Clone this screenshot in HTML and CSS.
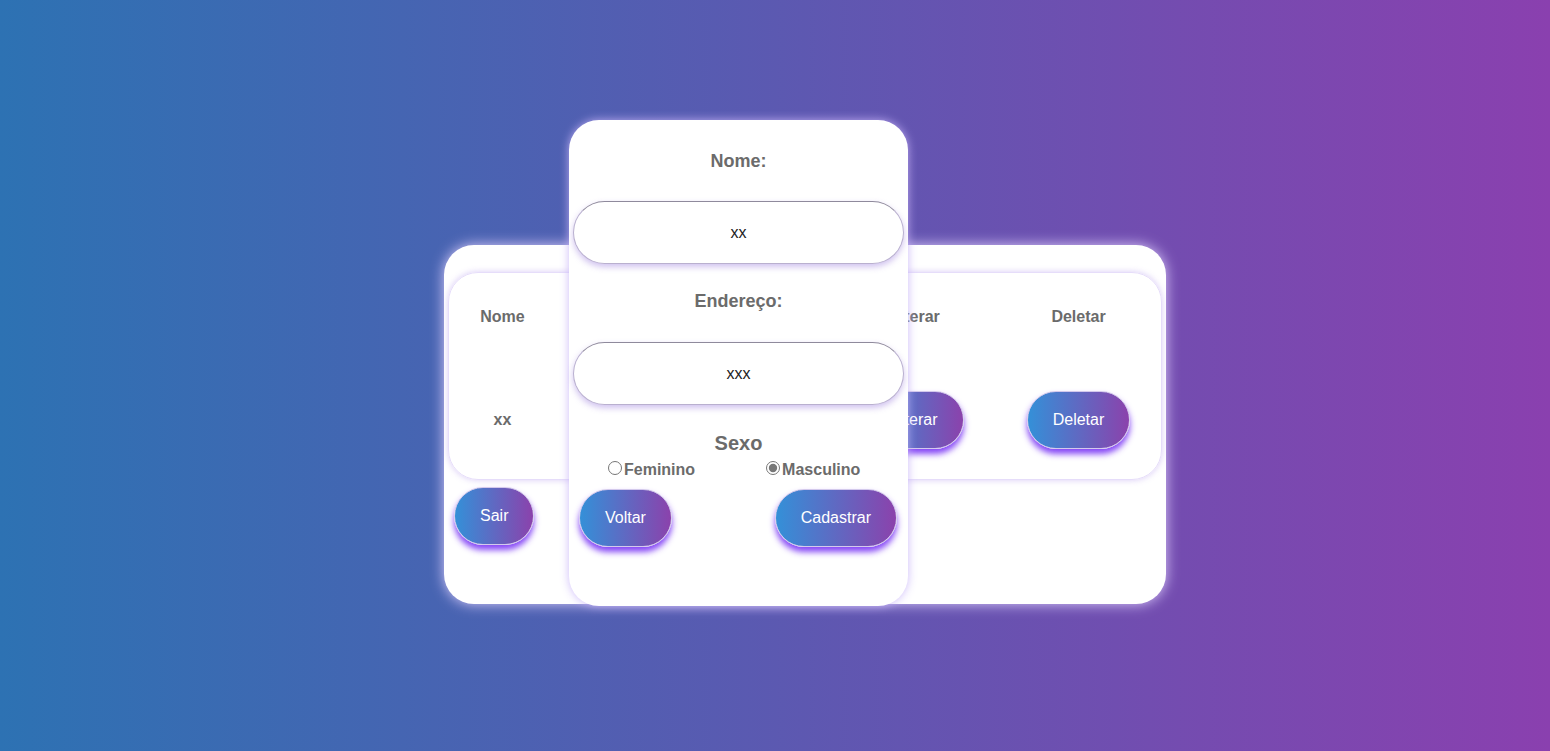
FILE: index.html
```html
<!DOCTYPE html>
<html lang="pt-BR">
<head>
  <meta charset="UTF-8">
  <meta name="viewport" content="width=device-width, initial-scale=1.0">
  <title>Cadastro</title>
  <link rel="stylesheet" href="styles.css">
</head>
<body>
  <div class="stage">
    <!-- lista de pessoas -->
    <div class="card list-card">
      <div class="table-box">
        <div class="grid">
          <div class="th">Nome</div>
          <div class="th">Endereço</div>
          <div class="th">Sexo</div>
          <div class="th">Alterar</div>
          <div class="th">Deletar</div>
          <div class="td">xx</div>
          <div class="td">xxx</div>
          <div class="td">Masculino</div>
          <div class="td"><button class="btn">Alterar</button></div>
          <div class="td"><button class="btn">Deletar</button></div>
        </div>
      </div>
      <button class="btn sair">Sair</button>

      <!-- formulario de cadastro -->
      <div class="card form-card">
        <label class="label" for="nome">Nome:</label>
        <input class="field" type="text" id="nome" value="xx">
        <label class="label endereco" for="endereco">Endereço:</label>
        <input class="field" type="text" id="endereco" value="xxx">
        <div class="label sexo">Sexo</div>
        <div class="radios">
          <label class="radio"><input type="radio" name="sexo">Feminino</label>
          <label class="radio"><input type="radio" name="sexo" checked>Masculino</label>
        </div>
        <div class="actions">
          <button class="btn">Voltar</button>
          <button class="btn">Cadastrar</button>
        </div>
      </div>
    </div>
  </div>
</body>
</html>
```

FILE: styles.css
```css
body {
  margin: 0;
  height: 100vh;
  font-family: "Liberation Sans", Arial, sans-serif;
  background: linear-gradient(to right, #2d72b3, #8a40af);
  overflow: hidden;
}
.stage {
  padding: 245px 0 0 444px;
}
.card {
  background-color: #fff;
  border-radius: 30px;
  box-shadow: 0 0 14px rgba(225, 210, 255, 0.95);
  box-sizing: border-box;
}
.list-card {
  position: relative;
  width: 722px;
  height: 359px;
  padding: 27px 4px 0;
}
.table-box {
  height: 208px;
  border-radius: 30px;
  border: 1px solid #e6ddfa;
  box-shadow: 0 0 6px rgba(170, 140, 235, 0.45);
  box-sizing: border-box;
  padding-top: 35px;
}
.grid {
  display: grid;
  grid-template-columns: 107px 138px 138px 164px 165px;
  grid-template-rows: 18px 58px;
  row-gap: 65px;
  align-items: center;
  text-align: center;
}
.th, .td {
  font-size: 16px;
  font-weight: bold;
  color: #6b6b6b;
  line-height: 18px;
}
.btn {
  height: 58px;
  padding: 0 25px;
  font-family: "Liberation Sans", Arial, sans-serif;
  font-size: 16px;
  color: #fff;
  border: 1px solid #d3c9ec;
  border-radius: 30px;
  background: linear-gradient(to right, #3490d8, #8b42ac);
  box-shadow: 0 5px 6px rgba(120, 50, 245, 0.9);
  cursor: pointer;
}
.sair {
  margin: 7px 0 0 6px;
}
.form-card {
  position: absolute;
  left: 125px;
  top: -125px;
  width: 339px;
  height: 486px;
  padding: 31px 4px 0;
  display: flex;
  flex-direction: column;
  align-items: center;
  box-shadow: 0 0 10px rgba(200, 180, 250, 0.9);
}
.label {
  font-size: 18px;
  font-weight: bold;
  color: #6b6b6b;
  line-height: 21px;
  margin-bottom: 29px;
}
.label.endereco {
  margin: 27px 0 30px;
}
.label.sexo {
  font-size: 20px;
  line-height: 23px;
  margin: 27px 0 0;
}
.field {
  width: 100%;
  height: 63px;
  box-sizing: border-box;
  border: 1px solid #b9b0cf;
  border-top-color: #8f8a9c;
  border-radius: 32px;
  text-align: center;
  font-family: "Liberation Sans", Arial, sans-serif;
  font-size: 16px;
  color: #222;
  box-shadow: 0 3px 6px rgba(150, 120, 220, 0.45);
  outline: none;
}
.radios {
  align-self: stretch;
  display: flex;
  gap: 71px;
  padding-left: 35px;
  margin-top: 5px;
  height: 20px;
}
.radio {
  display: flex;
  align-items: flex-start;
  font-size: 16px;
  font-weight: bold;
  color: #6b6b6b;
  line-height: 20px;
}
.radio input {
  width: 14px;
  height: 14px;
  margin: 1px 2px 0 0;
  accent-color: #777;
}
.actions {
  align-self: stretch;
  display: flex;
  justify-content: space-between;
  padding: 0 7px 0 6px;
  margin-top: 9px;
}
```
